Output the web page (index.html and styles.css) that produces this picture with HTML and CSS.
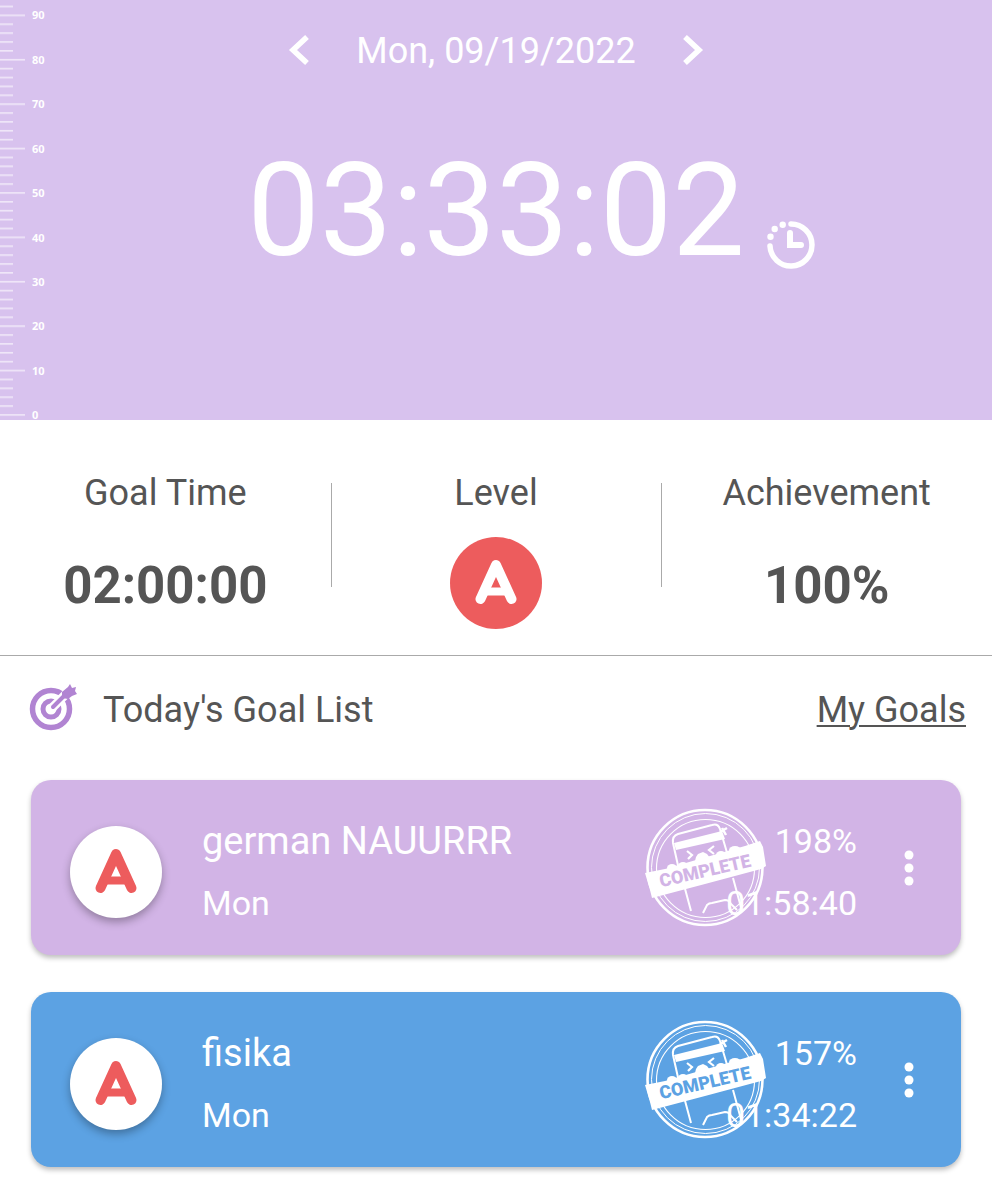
FILE: index.html
```
<!DOCTYPE html>
<html lang="en">
<head>
    <meta charset="UTF-8">
    <title>Today's Goal List</title>
    <link rel="stylesheet" href="styles.css">
</head>
<body>
<svg class="defs" width="0" height="0" aria-hidden="true">
    <symbol id="grade-a" viewBox="0 0 92 92">
        <g fill="none" stroke="currentColor" stroke-linecap="round" stroke-linejoin="round">
            <path d="M30.500 62 46 28 61.500 62" stroke-width="10"/>
            <path d="M37 54.500H55" stroke-width="8"/>
        </g>
    </symbol>
    <symbol id="stamp" viewBox="0 0 122 120">
        <g fill="none" stroke="#fff">
            <circle cx="60" cy="59.500" r="57.500" stroke-width="2.600"/>
            <circle cx="60.500" cy="59.500" r="54" stroke-width="1"/>
            <circle cx="60.500" cy="60.500" r="49" stroke-width="1.100"/>
            <path d="M34 62 28 35Q27 28 33 26L67 17Q73 15 75 21L83 48M39 77 46 103M88 70 97 103M58 105 62 97Q64 95 67 95L80 92Q84 92 86 96L92 102" stroke-width="2"/>
            <path d="M42 43 47 47 43 51M69 38 64 42 69 46" stroke-width="2.200"/>
            <path d="M75 24 82 20M77 20 81 27" stroke-width="2.500"/>
        </g>
        <g fill="#fff">
            <path d="M29 35 77 23 80 31 31 42Z"/>
            <ellipse cx="27" cy="60" rx="5" ry="4"/>
            <ellipse cx="38" cy="58" rx="5" ry="4"/>
            <path d="M50 53 51 49 53 46 58 44 62 46 65 50Z"/>
            <ellipse cx="76" cy="47" rx="5" ry="4"/>
            <ellipse cx="90" cy="42" rx="6" ry="4"/>
            <path d="M0 65 20 61 58 50 100 38 115 33 118 39 121 58 116 61 60 76 7 90 5 82Z"/>
        </g>
    </symbol>
</svg>

<header class="timer">
    <svg class="ruler" width="50" height="420" aria-hidden="true">
        <defs>
            <pattern id="ticks" width="50" height="44.4" y="-29.9" patternUnits="userSpaceOnUse">
                <path d="M0 .9H25M0 9.800H13M0 18.700H13M0 27.500H13M0 36.400H13" stroke="#fff" stroke-opacity=".8" stroke-width="1.300"/>
            </pattern>
        </defs>
        <rect width="50" height="420" fill="url(#ticks)"/>
        <g class="ruler-labels">
            <text x="32" y="19">90</text>
            <text x="32" y="64">80</text>
            <text x="32" y="108">70</text>
            <text x="32" y="153">60</text>
            <text x="32" y="197">50</text>
            <text x="32" y="242">40</text>
            <text x="32" y="286">30</text>
            <text x="32" y="330">20</text>
            <text x="32" y="375">10</text>
            <text x="32" y="419">0</text>
        </g>
    </svg>
    <div class="date-bar">
        <button type="button" aria-label="Previous day">
            <svg width="22" height="32" viewBox="0 0 22 32"><path d="M19 2 5 15 19 28" fill="none" stroke="#fff" stroke-width="5.500"/></svg>
        </button>
        <span class="date">Mon, 09/19/2022</span>
        <button type="button" aria-label="Next day">
            <svg width="22" height="32" viewBox="0 0 22 32"><path d="M3 2 17 15 3 28" fill="none" stroke="#fff" stroke-width="5.500"/></svg>
        </button>
    </div>
    <div class="clock">
        <h1>03:33:02</h1>
        <button type="button" aria-label="Time history">
            <svg width="50" height="50" viewBox="0 0 50 50">
                <path d="M25 4A21 21 0 1 1 4 26" fill="none" stroke="#fff" stroke-width="5.500" stroke-linecap="round"/>
                <path d="M24 13V25H35" fill="none" stroke="#fff" stroke-width="6" stroke-linecap="round"/>
                <g fill="#fff"><circle cx="16.700" cy="4.700" r="3.200"/><circle cx="8.700" cy="9" r="3.200"/><circle cx="4.500" cy="16.700" r="3.200"/></g>
            </svg>
        </button>
    </div>
</header>

<section class="stats">
    <div class="stat">
        <h2>Goal Time</h2>
        <strong>02:00:00</strong>
    </div>
    <div class="stat">
        <h2>Level</h2>
        <svg class="level" role="img" aria-label="A"><use href="#grade-a"/></svg>
    </div>
    <div class="stat">
        <h2>Achievement</h2>
        <strong>100%</strong>
    </div>
</section>

<main>
    <div class="list-head">
        <svg width="48" height="48" viewBox="0 0 48 48" aria-hidden="true">
            <g fill="none" stroke="#b184d2">
                <circle cx="22" cy="26" r="18.500" stroke-width="5.500"/>
                <circle cx="22" cy="26" r="8" stroke-width="5"/>
                <path d="M23 25 44 4" stroke="#fff" stroke-width="9"/>
                <path d="M24 24 38 10" stroke-width="4" stroke-linecap="round"/>
            </g>
            <path d="M33 9 39 4 41 1 43 5 47 4 46 8 48 11 43 13 39 16 33 15Z" fill="#b184d2"/>
        </svg>
        <h2>Today's Goal List</h2>
        <a href="#">My Goals</a>
    </div>
    <ul class="goals">
        <li class="goal purple">
            <svg class="badge" role="img" aria-label="A"><use href="#grade-a"/></svg>
            <div class="info">
                <h3>german NAUURRR</h3>
                <p>Mon</p>
            </div>
            <div class="result">
                <svg class="stamp">
                    <use href="#stamp"/>
                    <text x="60" y="69" text-anchor="middle" transform="rotate(-13 60 63)">COMPLETE</text>
                </svg>
                <p>198%</p>
                <p>01:58:40</p>
            </div>
            <button type="button" aria-label="More options">
                <svg width="10" height="36" viewBox="0 0 10 36" fill="#fff"><circle cx="5" cy="5" r="4.500"/><circle cx="5" cy="18" r="4.500"/><circle cx="5" cy="31" r="4.500"/></svg>
            </button>
        </li>
        <li class="goal blue">
            <svg class="badge" role="img" aria-label="A"><use href="#grade-a"/></svg>
            <div class="info">
                <h3>fisika</h3>
                <p>Mon</p>
            </div>
            <div class="result">
                <svg class="stamp">
                    <use href="#stamp"/>
                    <text x="60" y="69" text-anchor="middle" transform="rotate(-13 60 63)">COMPLETE</text>
                </svg>
                <p>157%</p>
                <p>01:34:22</p>
            </div>
            <button type="button" aria-label="More options">
                <svg width="10" height="36" viewBox="0 0 10 36" fill="#fff"><circle cx="5" cy="5" r="4.500"/><circle cx="5" cy="18" r="4.500"/><circle cx="5" cy="31" r="4.500"/></svg>
            </button>
        </li>
    </ul>
</main>
</body>
</html>
```
FILE: styles.css
```
* {
    margin: 0;
    padding: 0;
    box-sizing: border-box;
}

body {
    background-color: #fff;
    color: #555;
    font-family: Roboto, "Liberation Sans", sans-serif;
    font-size: 36px;
    line-height: 44px;
}

h1, h2, h3 {
    font-size: 36px;
    font-weight: 400;
}

ul {
    list-style: none;
}

svg {
    display: block;
}

button {
    border: 0;
    background: none;
    cursor: pointer;
}

.defs {
    position: absolute;
}

/* timer */
.timer {
    position: relative;
    padding: 29px 0 131px;
    background-color: #d8c2ee;
    color: #fff;
}

.ruler {
    position: absolute;
    top: 0;
    left: 0;
}

.ruler-labels {
    fill: #fff;
    font: 700 11px "Noto Sans", sans-serif;
}

.date-bar {
    display: flex;
    justify-content: center;
    align-items: center;
    gap: 46px;
}

.clock {
    display: grid;
    grid-template-columns: 1fr auto 1fr;
    align-items: end;
    gap: 21px;
    margin-top: 60px;
}

.clock h1 {
    grid-column: 2;
    font-size: 129px;
    line-height: 156px;
}

.clock button {
    justify-self: start;
    padding-bottom: 19px;
}

/* stats */
.stats {
    display: grid;
    grid-template-columns: repeat(3, 1fr);
    padding: 51px 0 20px;
    border-bottom: 1px solid #aaa;
}

.stat {
    position: relative;
    display: flex;
    flex-direction: column;
    align-items: center;
    gap: 22px;
}

.stat + .stat::before {
    content: "";
    position: absolute;
    top: 12px;
    left: 0;
    height: 104px;
    border-left: 1px solid #aaa;
}

.stat strong {
    font-size: 51px;
    line-height: 98px;
}

.level {
    width: 92px;
    height: 92px;
    border-radius: 50%;
    background-color: #ed5c5d;
    color: #fff;
}

/* goal list */
main {
    padding: 27px 31px 32px;
}

.list-head {
    display: flex;
    align-items: flex-start;
    gap: 26px;
    margin: 0 -5px 43px -2px;
}

.list-head h2, .list-head a {
    line-height: 54px;
}

.list-head a {
    margin-left: auto;
    color: #555;
    text-decoration-thickness: 2px;
    text-underline-offset: 3px;
}

.goals {
    display: flex;
    flex-direction: column;
    gap: 37px;
}

.goal {
    display: flex;
    align-items: center;
    min-height: 175px;
    padding-left: 39px;
    border-radius: 20px;
    background-color: var(--tone);
    box-shadow: 0 3px 5px rgba(0, 0, 0, .25);
    color: #fff;
}

.purple {
    --tone: #d2b4e6;
}

.blue {
    --tone: #5ca2e3;
}

.badge {
    flex: none;
    width: 92px;
    height: 92px;
    margin-top: 8px;
    border-radius: 50%;
    background-color: #fff;
    box-shadow: 0 4px 8px rgba(0, 0, 0, .3);
    color: #ed5c5d;
}

.info {
    flex: 1;
    margin-left: 40px;
    padding-top: 8px;
}

.result {
    position: relative;
    padding-top: 8px;
    text-align: right;
}

.goal h3, .goal p {
    line-height: 62px;
}

.goal h3 {
    font-size: 38px;
}

.goal p {
    font-size: 34px;
}

.stamp {
    position: absolute;
    top: 6px;
    right: 90px;
    width: 122px;
    height: 120px;
}

.stamp text {
    fill: var(--tone);
    font: 900 18px Roboto, sans-serif;
}

.goal button {
    display: flex;
    justify-content: center;
    width: 104px;
}
```
